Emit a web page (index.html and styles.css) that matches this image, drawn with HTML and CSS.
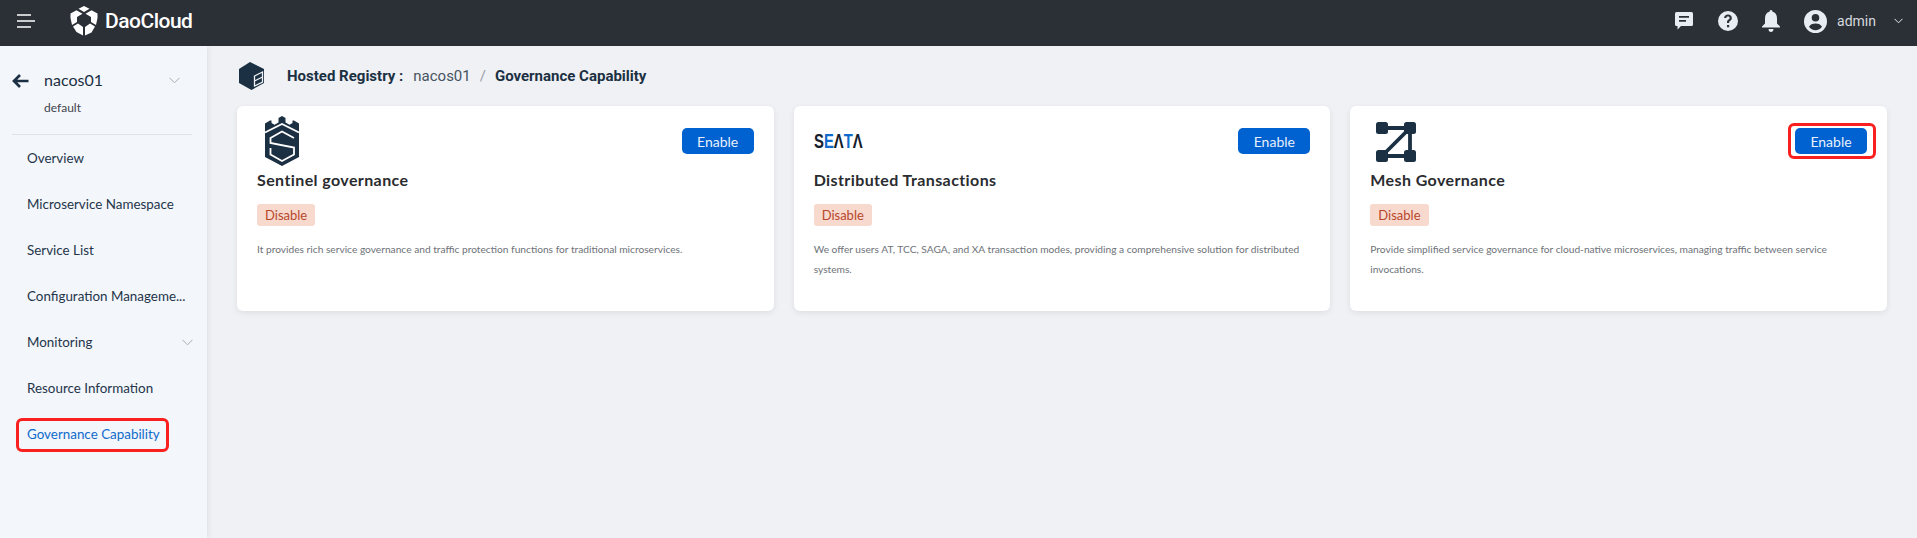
FILE: index.html
```html
<!DOCTYPE html>
<html lang="en">
<head>
    <meta charset="UTF-8">
    <title>DaoCloud</title>
    <link rel="stylesheet" href="styles.css">
</head>
<body>
    <header class="topbar">
        <div class="topbar-left">
            <svg class="menu-icon" width="18" height="14" viewBox="0 0 18 14"><path d="M0 1h14M0 7h18M0 13h14" stroke="#fff" stroke-width="1.6" fill="none"/></svg>
            <svg class="logo-mark" width="28" height="30" viewBox="0 0 28 30"><path fill="#fff" d="M14 0l5.500 2.800L14 6 8.500 2.800zM6.500 4.200l6 3.500L7 11v5l-5 3-1.500-7V7.500zM21.500 4.200l6 3.300V12L26 19l-5-3v-5l-5.500-3.300zM3 20.500l5-3 5 3.500v8.500l-6.500-3.500zM25 20.500l-3.500 6L15 29.500V21l5-3.500z"/></svg>
            <span class="brand">DaoCloud</span>
        </div>
        <div class="topbar-right">
            <svg class="top-icon" width="20" height="20" viewBox="0 0 20 20"><path fill="#e8ecf3" fill-rule="evenodd" d="M2.500 1h15A1.500 1.500 0 0 1 19 2.500v11a1.500 1.500 0 0 1-1.500 1.500H7l-3.500 3.500V15h-1A1.500 1.500 0 0 1 1 13.500v-11A1.500 1.500 0 0 1 2.500 1zM5 5v1.800h10V5zM5 9v1.800h7V9z"/></svg>
            <svg class="top-icon" width="20" height="20" viewBox="0 0 20 20"><path fill="#e8ecf3" fill-rule="evenodd" d="M10 0a10 10 0 1 1 0 20a10 10 0 0 1 0-20zM9 14v2.200h2.200V14zM10 3.600c-2.200 0-3.800 1.400-3.900 3.400h2.200c.1-.9.700-1.400 1.700-1.400s1.600.5 1.600 1.300c0 .7-.4 1.100-1.100 1.600-1.100.8-1.500 1.500-1.500 2.900v.6h2.100v-.4c0-.8.200-1.200 1-1.700 1.100-.8 1.700-1.600 1.700-2.900 0-2.200-1.600-3.400-3.800-3.400z"/></svg>
            <svg class="top-icon" width="18" height="22" viewBox="0 0 18 22"><path fill="#e8ecf3" d="M9 0c1 0 1.500.7 1.500 1.800C13.500 2.500 15 5 15 8.500v5l3 3v1H0v-1l3-3v-5c0-3.500 1.500-6 4.500-6.700C7.500.7 8 0 9 0zM6.500 19h5c0 1.700-1.100 3-2.500 3s-2.500-1.300-2.500-3z"/></svg>
            <svg class="avatar" width="23" height="23" viewBox="0 0 23 23"><path fill="#e8ecf3" fill-rule="evenodd" d="M11.500 0a11.500 11.500 0 1 1 0 23a11.500 11.500 0 0 1 0-23zM11.500 4a3.800 3.800 0 1 0 0 7.600a3.800 3.800 0 0 0 0-7.600zM11.500 13.400c-2.900 0-5.600 1.200-6.500 3.300 1.500 2 3.900 3.500 6.500 3.500s5-1.500 6.500-3.500c-.9-2.100-3.600-3.300-6.500-3.300z"/></svg>
            <span class="username">admin</span>
            <svg class="user-caret" width="9" height="6" viewBox="0 0 9 6"><path d="M.5 .8l4 4 4-4" stroke="#e8ecf3" stroke-width="1" fill="none"/></svg>
        </div>
    </header>

    <div class="layout">
        <aside class="sidebar">
            <div class="side-head">
                <svg class="back-icon" width="17" height="14" viewBox="0 0 17 14"><path d="M16.500 7H2.500M8 1L2 7l6 6" stroke="#1b3042" stroke-width="2.700" fill="none"/></svg>
                <div class="side-title">
                    <div class="side-name">nacos01</div>
                    <div class="side-sub">default</div>
                </div>
                <svg class="caret" width="11" height="7" viewBox="0 0 11 7"><path d="M.5 .8l5 5 5-5" stroke="#a7adb5" stroke-width="1" fill="none"/></svg>
            </div>
            <nav class="side-nav">
                <a class="nav-item">Overview</a>
                <a class="nav-item">Microservice Namespace</a>
                <a class="nav-item">Service List</a>
                <a class="nav-item">Configuration Manageme...</a>
                <a class="nav-item">Monitoring
                    <svg class="caret" width="11" height="7" viewBox="0 0 11 7"><path d="M.5 .8l5 5 5-5" stroke="#a7adb5" stroke-width="1" fill="none"/></svg>
                </a>
                <a class="nav-item">Resource Information</a>
                <a class="nav-item active">Governance Capability<span class="mark mark-nav"></span></a>
            </nav>
        </aside>

        <main class="content">
            <div class="crumbs">
                <svg class="crumb-icon" width="25" height="28" viewBox="0 0 25 28"><path fill="#1b3042" d="M11 0l14 7v14L12.500 28 0 21V7z"/><path d="M15.500 14l8-4v10l-8 4zM15.500 19l8-4" stroke="#eff1f5" stroke-width="1.300" fill="none"/></svg>
                <span class="crumb-label">Hosted Registry :</span>
                <span class="crumb-link">nacos01</span>
                <span class="crumb-sep">/</span>
                <span class="crumb-label">Governance Capability</span>
            </div>

            <div class="cards">
                <section class="card">
                    <div class="card-top">
                        <svg class="logo-sentinel" width="34" height="50" viewBox="0 0 34 50"><path fill="#1b3042" d="M17 0l3.500 2v4.500l4 2.300 3-1.800V4.500h1.500L34 7.500V41l-17 9-17-9V7.500l5-3h1.500V7l3 1.800 4-2.300V2z"/><path d="M0 16.500l17-8.500 17 8.500M29 22l-12-6.500L5.500 22v5L29 31.500v7L17 45 5.500 38.500V32" stroke="#fff" stroke-width="1.800" fill="none"/></svg>
                        <button class="enable-btn">Enable</button>
                    </div>
                    <h3 class="card-title">Sentinel governance</h3>
                    <span class="tag">Disable</span>
                    <p class="card-desc">It provides rich service governance and traffic protection functions for traditional microservices.</p>
                </section>
                <section class="card">
                    <div class="card-top">
                        <span class="logo-seata">S<b>E</b>&Lambda;<b>T</b>&Lambda;</span>
                        <button class="enable-btn">Enable</button>
                    </div>
                    <h3 class="card-title">Distributed Transactions</h3>
                    <span class="tag">Disable</span>
                    <p class="card-desc">We offer users AT, TCC, SAGA, and XA transaction modes, providing a comprehensive solution for distributed systems.</p>
                </section>
                <section class="card">
                    <div class="card-top">
                        <svg class="logo-mesh" width="40" height="40" viewBox="0 0 40 40"><path d="M6 6h28M6 34h28M34 6v28M6 34L34 6" stroke="#1b3042" stroke-width="3.800" fill="none"/><rect x="0" y="0" width="12" height="12" rx="2.500" fill="#1b3042"/><rect x="28" y="0" width="12" height="12" rx="2.500" fill="#1b3042"/><rect x="0" y="28" width="12" height="12" rx="2.500" fill="#1b3042"/><rect x="28" y="28" width="12" height="12" rx="2.500" fill="#1b3042"/></svg>
                        <button class="enable-btn">Enable<span class="mark mark-btn"></span></button>
                    </div>
                    <h3 class="card-title">Mesh Governance</h3>
                    <span class="tag">Disable</span>
                    <p class="card-desc">Provide simplified service governance for cloud-native microservices, managing traffic between service invocations.</p>
                </section>
            </div>
        </main>
    </div>
</body>
</html>
```

FILE: styles.css
```css
* {
    box-sizing: border-box;
}
html, body {
    height: 100%;
}
body {
    margin: 0;
    font-family: Lato, "Noto Sans", sans-serif;
    background-color: #eff1f5;
    color: #1b3042;
    overflow: hidden;
    display: flex;
    flex-direction: column;
}

/* top bar */
.topbar {
    height: 46px;
    flex: none;
    background-color: #2b2f36;
    display: flex;
    align-items: center;
    justify-content: space-between;
    padding: 0 14px 4px 17px;
}
.topbar-left, .topbar-right {
    display: flex;
    align-items: center;
}
.logo-mark {
    margin-left: 35px;
}
.brand {
    margin-left: 7px;
    color: #fff;
    font-family: Roboto, sans-serif;
    font-size: 21px;
    font-weight: 500;
    letter-spacing: -0.5px;
}
.top-icon {
    margin-right: 24px;
}
.username {
    margin-left: 10px;
    color: #d5d8de;
    font-family: Roboto, sans-serif;
    font-size: 14px;
}
.user-caret {
    margin-left: 18px;
}

/* sidebar */
.layout {
    flex: 1;
    display: flex;
    min-height: 0;
}
.sidebar {
    width: 207px;
    flex: none;
    background-color: #f3f6fb;
    box-shadow: 1px 0 6px rgba(0, 0, 0, 0.08);
    padding: 0 15px 0 12px;
}
.side-head {
    height: 89px;
    display: flex;
    align-items: flex-start;
    padding-top: 24px;
    border-bottom: 1px solid #dfe3e9;
}
.back-icon {
    margin-top: 4px;
}
.side-title {
    margin-left: 15px;
    flex: 1;
}
.side-name {
    font-size: 16px;
    line-height: 20px;
}
.side-sub {
    margin-top: 10px;
    font-size: 12px;
    color: #3f444b;
    line-height: 16px;
}
.caret {
    flex: none;
    margin-top: 7px;
    margin-right: 12px;
}
.side-nav {
    margin-left: 15px;
}
.nav-item {
    position: relative;
    height: 46px;
    display: flex;
    align-items: center;
    justify-content: space-between;
    font-size: 13.4px;
    color: #24354a;
    white-space: nowrap;
}
.nav-item .caret {
    margin: 0 -1px 0 0;
}
.nav-item.active {
    color: #0f6bcb;
}
.mark {
    position: absolute;
    border: 3px solid #fb2020;
    border-radius: 6px;
    pointer-events: none;
}
.mark-nav {
    left: -11px;
    top: 7px;
    width: 153px;
    height: 34px;
}
.mark-btn {
    left: -7px;
    top: -5px;
    width: 88px;
    height: 36px;
}

/* page content */
.content {
    flex: 1;
    min-width: 0;
    padding: 0 30px;
}
.crumbs {
    height: 60px;
    display: flex;
    align-items: center;
    padding-left: 2px;
    font-family: Roboto, sans-serif;
    font-size: 15px;
}
.crumb-icon {
    margin-right: 23px;
}
.crumb-label {
    font-weight: 700;
}
.crumb-link {
    margin-left: 10px;
    color: #465361;
}
.crumb-sep {
    margin: 0 9px;
    color: #9aa0a8;
}
.cards {
    display: grid;
    grid-template-columns: repeat(3, 1fr);
    gap: 20px;
}
.card {
    height: 205px;
    background-color: #fff;
    border-radius: 6px;
    box-shadow: 0 2px 6px rgba(0, 0, 0, 0.08);
    padding: 0 20px;
}
.card-top {
    height: 60px;
    display: flex;
    align-items: center;
    justify-content: space-between;
}
.logo-sentinel {
    margin: 10px 0 0 8px;
}
.logo-mesh {
    margin: 11px 0 0 6px;
}
.logo-seata {
    display: inline-block;
    margin-top: 10px;
    font-family: "Liberation Sans", sans-serif;
    font-size: 19.5px;
    font-weight: 700;
    color: #14202c;
    transform: scaleX(0.76);
    transform-origin: left center;
}
.logo-seata b {
    color: #0f6bcb;
}
.enable-btn {
    position: relative;
    width: 72px;
    height: 26px;
    margin-top: 10px;
    padding: 0;
    border: none;
    border-radius: 5px;
    background-color: #0061d1;
    color: #e8f0fb;
    font-family: Lato, sans-serif;
    font-size: 14px;
    cursor: pointer;
}
.card-title {
    margin: 2px 0 0;
    font-size: 16px;
    font-weight: 700;
    line-height: 24px;
    letter-spacing: 0.4px;
    color: #2a2c30;
}
.tag {
    display: inline-block;
    margin-top: 12px;
    height: 22px;
    line-height: 22px;
    padding: 0 8px;
    background-color: #f8d9ce;
    border-radius: 3px;
    font-size: 13px;
    color: #b7472a;
}
.card-desc {
    margin: 13px 0 0;
    font-size: 10.2px;
    line-height: 20px;
    color: #6e7278;
}
```
